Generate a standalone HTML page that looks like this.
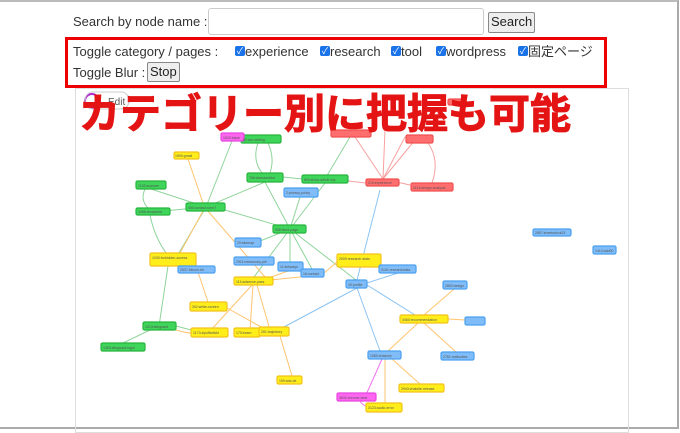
<!DOCTYPE html>
<html><head><meta charset="utf-8"><style>
body{margin:0;width:680px;height:428px;overflow:hidden;background:#fff;font-family:"Liberation Sans","Noto Sans CJK JP",sans-serif;position:relative}
.frame{position:absolute;left:0;top:0;width:677px;height:425px;border-top:2px solid #bbb;border-right:2px solid #aaa;border-bottom:2px solid #aaa}
.t{position:absolute;font-size:13px;color:#333;white-space:nowrap;line-height:16px}
.inp{position:absolute;left:208px;top:8px;width:276px;height:27px;border:1px solid #ccc;border-radius:3px;box-sizing:border-box}
.btn{position:absolute;background:#eee;border:1px solid #888;border-radius:2px;font-size:13px;color:#222;box-sizing:border-box;line-height:18px;padding:0 2px}
.red{position:absolute;left:65px;top:37px;width:542px;height:51px;border:3px solid #e00;box-sizing:border-box}
.cb{position:absolute;width:10px;height:10px;background:#1a73e8;border-radius:2px;color:#fff;font-size:9px;line-height:10px;text-align:center}
.graph{position:absolute;left:75px;top:88px;width:554px;height:345px;border:1px solid #ddd;box-sizing:border-box}
.big{position:absolute;left:79px;top:89px;font-size:41px;font-weight:bold;color:#e41414;white-space:nowrap;line-height:50px;-webkit-text-stroke:1px #e41414}
</style></head><body>
<div class="frame"></div>
<div class="t" style="left:73px;top:14px">Search by node name :</div>
<div class="inp"></div>
<div class="btn" style="left:488px;top:12px;height:21px">Search</div>
<div class="graph"></div>
<svg style="position:absolute;left:0;top:0" width="680" height="428">
<g stroke-width="1" fill="none">
<g stroke="#8fd49a">
<line x1="206" y1="207" x2="232" y2="141"/><line x1="206" y1="207" x2="151" y2="189"/><line x1="206" y1="207" x2="153" y2="212"/><line x1="206" y1="207" x2="265" y2="182"/><line x1="206" y1="207" x2="176" y2="258"/>
<line x1="290" y1="229" x2="225" y2="210"/><line x1="290" y1="229" x2="265" y2="182"/><line x1="290" y1="229" x2="325" y2="183"/><line x1="290" y1="229" x2="300" y2="197"/><line x1="290" y1="229" x2="250" y2="245"/><line x1="290" y1="229" x2="254" y2="277"/><line x1="290" y1="229" x2="290" y2="262"/><line x1="290" y1="229" x2="312" y2="269"/><line x1="290" y1="229" x2="356" y2="280"/>
<line x1="302" y1="179" x2="283" y2="177"/><path d="M258 143 Q252 160 262 173 M270 173 Q275 158 268 143"/><path d="M145 189 Q140 200 148 208"/><path d="M150 215 Q155 240 170 258"/><line x1="159" y1="326" x2="168" y2="266"/><line x1="123" y1="343" x2="150" y2="330"/><line x1="176" y1="326" x2="191" y2="330"/><line x1="325" y1="179" x2="350" y2="137"/>
</g>
<g stroke="#f7a0a0"><line x1="383" y1="179" x2="355" y2="137"/><line x1="383" y1="179" x2="405" y2="137"/><line x1="383" y1="179" x2="415" y2="140"/><line x1="383" y1="179" x2="410" y2="185"/><line x1="366" y1="183" x2="348" y2="181"/><path d="M428 143 Q440 160 432 183"/><line x1="383" y1="179" x2="385" y2="130"/></g>
<g stroke="#ffc470"><line x1="188" y1="159" x2="203" y2="203"/><line x1="180" y1="253" x2="203" y2="211"/><line x1="196" y1="266" x2="208" y2="302"/><line x1="265" y1="277" x2="207" y2="210"/><line x1="260" y1="281" x2="302" y2="266"/><line x1="260" y1="281" x2="310" y2="276"/><line x1="337" y1="262" x2="324" y2="273"/><line x1="360" y1="261" x2="382" y2="266"/><line x1="227" y1="308" x2="272" y2="333"/><line x1="211" y1="330" x2="252" y2="285"/><line x1="250" y1="330" x2="253" y2="285"/><line x1="270" y1="330" x2="257" y2="285"/><line x1="280" y1="336" x2="292" y2="376"/><path d="M228 335 Q190 335 176 330"/><line x1="424" y1="315" x2="454" y2="289"/><line x1="448" y1="319" x2="465" y2="320"/><line x1="424" y1="323" x2="456" y2="352"/><line x1="418" y1="323" x2="388" y2="351"/><line x1="420" y1="384" x2="392" y2="359"/><line x1="385" y1="403" x2="385" y2="359"/></g>
<g stroke="#8cc4f4"><line x1="357" y1="280" x2="380" y2="190"/><line x1="357" y1="288" x2="284" y2="327"/><line x1="357" y1="288" x2="380" y2="351"/><line x1="367" y1="285" x2="415" y2="315"/><line x1="367" y1="283" x2="398" y2="273"/></g>
<path stroke="#f070f0" d="M365 397 Q375 375 382 359 M360 401 Q363 406 367 406"/>
</g>
<g font-size="3.5" fill="#555" stroke-width="1.2">
<g fill="#3fd45a" stroke="#27b53f"><rect x="241" y="135" width="40" height="8" rx="1.5"/><rect x="136" y="181" width="30" height="8" rx="1.5"/><rect x="247" y="173" width="36" height="9" rx="1.5"/><rect x="302" y="175" width="46" height="8" rx="1.5"/><rect x="136" y="208" width="34" height="7" rx="1.5"/><rect x="186" y="203" width="39" height="8" rx="1.5"/><rect x="273" y="225" width="33" height="8" rx="1.5"/><rect x="143" y="322" width="33" height="8" rx="1.5"/><rect x="101" y="343" width="44" height="8" rx="1.5"/></g>
<g fill="#ff6e6e" stroke="#f05050"><rect x="331" y="130" width="40" height="7" rx="1.5"/><rect x="406" y="135" width="27" height="8" rx="1.5"/><rect x="366" y="179" width="33" height="7" rx="1.5"/><rect x="411" y="183" width="42" height="8" rx="1.5"/><rect x="448" y="99" width="18" height="6" rx="1.5"/></g>
<g fill="#ff66f0" stroke="#e845e0"><rect x="221" y="133" width="23" height="8" rx="1.5"/><rect x="337" y="393" width="39" height="8" rx="1.5"/></g>
<g fill="#ffee1a" stroke="#f2c21a"><rect x="174" y="152" width="25" height="7" rx="1.5"/><rect x="150" y="253" width="46" height="13" rx="1.5"/><rect x="337" y="254" width="44" height="13" rx="1.5"/><rect x="234" y="277" width="39" height="8" rx="1.5"/><rect x="190" y="302" width="37" height="9" rx="1.5"/><rect x="400" y="315" width="48" height="8" rx="1.5"/><rect x="191" y="328" width="37" height="9" rx="1.5"/><rect x="234" y="328" width="26" height="9" rx="1.5"/><rect x="259" y="327" width="30" height="9" rx="1.5"/><rect x="277" y="376" width="25" height="8" rx="1.5"/><rect x="399" y="384" width="45" height="8" rx="1.5"/><rect x="366" y="403" width="36" height="9" rx="1.5"/></g>
<g fill="#80bdf8" stroke="#4aa0f0"><rect x="284" y="188" width="34" height="9" rx="1.5"/><rect x="235" y="238" width="26" height="9" rx="1.5"/><rect x="178" y="266" width="37" height="7" rx="1.5"/><rect x="234" y="257" width="40" height="8" rx="1.5"/><rect x="278" y="262" width="25" height="9" rx="1.5"/><rect x="301" y="269" width="23" height="8" rx="1.5"/><rect x="379" y="265" width="37" height="8" rx="1.5"/><rect x="346" y="280" width="21" height="8" rx="1.5"/><rect x="443" y="281" width="24" height="8" rx="1.5"/><rect x="465" y="317" width="20" height="8" rx="1.5"/><rect x="368" y="351" width="33" height="8" rx="1.5"/><rect x="441" y="352" width="33" height="8" rx="1.5"/><rect x="533" y="229" width="38" height="7" rx="1.5"/><rect x="593" y="246" width="23" height="8" rx="1.5"/></g>
<g stroke="none"><text x="243" y="141">82:seo-writing</text><text x="175" y="157">1590:gmail</text><text x="138" y="187">1132:scanner</text><text x="249" y="179">766:classiceditor</text><text x="304" y="181">803:show-article-top</text><text x="138" y="213">1066:recaptcha</text><text x="188" y="209">400:contact-form7</text><text x="275" y="231">908:fixed-page</text><text x="145" y="328">1213:siteguard</text><text x="103" y="349">1363:siteguard-login</text><text x="368" y="184">210:experience</text><text x="413" y="189">1113:design-analysis</text><text x="223" y="139">1520:black</text><text x="339" y="399">3632:chrome-best</text><text x="152" y="259">1030:forbidden-access</text><text x="339" y="260">2009:research-stats</text><text x="236" y="283">114:adsense-pass</text><text x="192" y="308">302:white-screen</text><text x="402" y="321">3460:recommendation</text><text x="193" y="334">1173:zipoffarticle</text><text x="236" y="334">170:exam</text><text x="261" y="333">261:trajectory</text><text x="279" y="382">199:ads-txt</text><text x="401" y="390">2943:chatsite-release</text><text x="368" y="409">3123:audio-error</text><text x="286" y="194">2:privacy-policy</text><text x="237" y="244">20:sitemap</text><text x="180" y="271">2537:bitcoin-bb</text><text x="236" y="263">2911:measurary-pie</text><text x="280" y="268">11:linkways</text><text x="303" y="275">16:contact</text><text x="381" y="271">3101:researchdata</text><text x="348" y="286">40:profile</text><text x="445" y="287">2853:design</text><text x="370" y="357">1080:chasney</text><text x="443" y="358">2781:mailsuites</text><text x="535" y="234">2857:sheetsdock23</text><text x="595" y="252">1414:add00</text></g>
</g>
<circle cx="92" cy="101" r="7" fill="none" stroke="#b22bd0" stroke-width="2"/>
<rect x="85" y="92" width="44" height="17" rx="8" fill="none" stroke="#ccc"/>
<text x="108" y="105" font-size="10" fill="#555" font-family="Liberation Sans">Edit</text>
</svg>
<div class="big">カテゴリー別に把握も可能</div>
<div class="red"></div>
<div class="t" style="left:73px;top:44px">Toggle category / pages :</div>
<div class="cb" style="left:235px;top:46px">✓</div><div class="t" style="left:245px;top:44px">experience</div>
<div class="cb" style="left:320px;top:46px">✓</div><div class="t" style="left:330px;top:44px">research</div>
<div class="cb" style="left:391px;top:46px">✓</div><div class="t" style="left:401px;top:44px">tool</div>
<div class="cb" style="left:436px;top:46px">✓</div><div class="t" style="left:446px;top:44px">wordpress</div>
<div class="cb" style="left:518px;top:46px">✓</div><div class="t" style="left:528px;top:44px">固定ページ</div>
<div class="t" style="left:73px;top:65px">Toggle Blur :</div>
<div class="btn" style="left:147px;top:62px;height:20px">Stop</div>
</body></html>
